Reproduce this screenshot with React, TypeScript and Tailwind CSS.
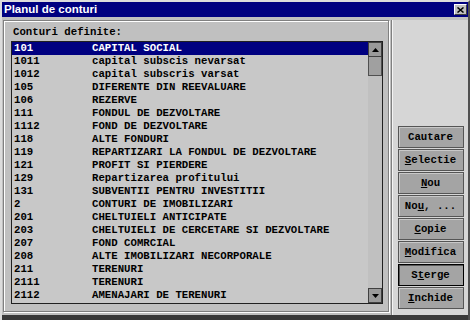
const rows: [string, string][] = [
  ["101", "CAPITAL SOCIAL"],
  ["1011", "capital subscis nevarsat"],
  ["1012", "capital subscris varsat"],
  ["105", "DIFERENTE DIN REEVALUARE"],
  ["106", "REZERVE"],
  ["111", "FONDUL DE DEZVOLTARE"],
  ["1112", "FOND DE DEZVOLTARE"],
  ["118", "ALTE FONDURI"],
  ["119", "REPARTIZARI LA FONDUL DE DEZVOLTARE"],
  ["121", "PROFIT SI PIERDERE"],
  ["129", "Repartizarea profitului"],
  ["131", "SUBVENTII PENTRU INVESTITII"],
  ["2", "CONTURI DE IMOBILIZARI"],
  ["201", "CHELTUIELI ANTICIPATE"],
  ["203", "CHELTUIELI DE CERCETARE SI DEZVOLTARE"],
  ["207", "FOND COMRCIAL"],
  ["208", "ALTE IMOBILIZARI NECORPORALE"],
  ["211", "TERENURI"],
  ["2111", "TERENURI"],
  ["2112", "AMENAJARI DE TERENURI"],
];

// label, index of underlined letter (-1 = none), focused
const buttons: [string, number, boolean][] = [
  ["Cautare", -1, false],
  ["Selectie", 0, false],
  ["Nou", 0, false],
  ["Nou, ...", 2, false],
  ["Copie", 0, false],
  ["Modifica", 0, false],
  ["Sterge", 1, true],
  ["Inchide", 0, false],
];

const mono = { fontFamily: "'Liberation Mono', 'Courier New', monospace" };

const Btn = ({ label, u, focus }: { label: string; u: number; focus: boolean }) => (
  <div
    className={`h-[22px] w-[66px] flex items-center justify-center bg-[#a4a4a4] text-[10.7px] font-bold text-black border ${
      focus ? "border-black shadow-[inset_1px_1px_0_#5a5a5a]" : "border-[#555] shadow-[inset_1px_1px_0_#c8c8c8]"
    }`}
    style={mono}
  >
    {u < 0 ? (
      label
    ) : (
      <span>
        {label.slice(0, u)}
        <span className="underline underline-offset-1">{label[u]}</span>
        {label.slice(u + 1)}
      </span>
    )}
  </div>
);

const Arrow = ({ up }: { up: boolean }) => (
  <div className="h-[15px] w-[14px] bg-[#9a9a9a] border border-[#404040] flex items-center justify-center">
    <svg width="7" height="4" viewBox="0 0 7 4">
      <polygon points={up ? "3.5,0 7,4 0,4" : "0,0 7,0 3.5,4"} fill="#000" />
    </svg>
  </div>
);

export default function App() {
  return (
    <div className="w-[470px] h-[320px] bg-[#c0c0c0] flex flex-col overflow-hidden border-t-2 border-l-2 border-r-2 border-t-[#dcdcdc] border-l-[#dcdcdc] border-r-[#505050]">
      <div className="h-[15px] bg-[#000080] flex items-center justify-between pl-[2px] pr-[1px]">
        <span className="text-white font-bold text-[11.5px] leading-none" style={{ fontFamily: "'Liberation Sans', Arial, sans-serif" }}>
          Planul de conturi
        </span>
        <div className="w-[13px] h-[11px] bg-[#c0c0c0] border-t border-l border-white border-r border-b border-r-[#404040] border-b-[#404040] flex items-center justify-center">
          <svg width="7" height="6" viewBox="0 0 7 6">
            <path d="M0.5 0.5 L6.5 5.5 M6.5 0.5 L0.5 5.5" stroke="#000" strokeWidth="1.5" />
          </svg>
        </div>
      </div>
      <div className="flex flex-1 pt-[3px]">
        <div className="w-[389px] pl-[1px] pr-[2px] pb-[3px] flex">
          <div className="flex-1 border border-[#808080] shadow-[inset_1px_1px_0_#fff,1px_1px_0_#fff] pl-[7px] pr-[5px] pt-[4px] flex flex-col">
            <div className="h-[15px] pl-[2px] text-[10.7px] font-bold text-black leading-[15px]" style={mono}>
              Conturi definite:
            </div>
            <div className="mt-[1px] h-[263px] border border-[#202020] bg-[#c8c8c8] flex">
              <div className="flex-1 pt-0">
                {rows.map(([code, name], i) => (
                  <div
                    key={code + i}
                    className={`h-[13px] flex items-center text-[10.7px] font-bold leading-none ${
                      i === 0 ? "bg-[#000080] text-white" : "text-black"
                    }`}
                    style={mono}
                  >
                    <span className="w-[80px] pl-[2px]">{code}</span>
                    <span className="whitespace-pre">{name}</span>
                  </div>
                ))}
              </div>
              <div className="w-[14px] flex flex-col bg-[#c0c0c0]">
                <Arrow up />
                <div className="h-[19px] bg-[#a0a0a0] border border-[#505050] border-t-0" />
                <div className="flex-1" />
                <Arrow up={false} />
              </div>
            </div>
          </div>
        </div>
        <div className="w-[1px] bg-[#808080]" />
        <div className="w-[1px] bg-[#f4f4f4]" />
        <div className="flex-1 bg-[#d6d6d6] flex flex-col items-center justify-end gap-[1px] pb-[6px]">
          {buttons.map(([l, u, f]) => (
            <Btn key={l} label={l} u={u} focus={f} />
          ))}
        </div>
      </div>
      <div className="h-[5px] bg-[#3a3a3a]" />
    </div>
  );
}
